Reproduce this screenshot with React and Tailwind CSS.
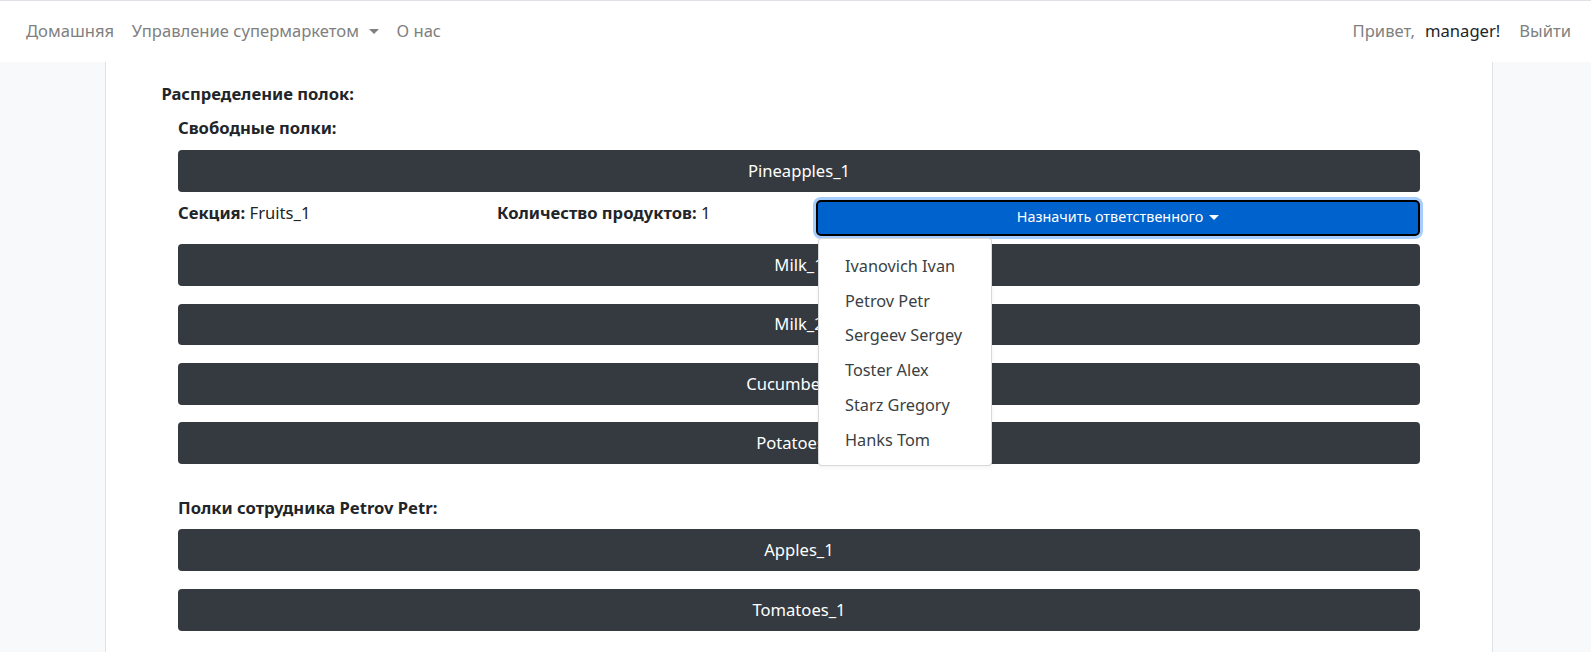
import React from 'react';

const freeShelves = ['Milk_1', 'Milk_2', 'Cucumbers_1', 'Potatoes_1'];
const ownShelves = ['Apples_1', 'Tomatoes_1'];
const employees = ['Ivanovich Ivan', 'Petrov Petr', 'Sergeev Sergey', 'Toster Alex', 'Starz Gregory', 'Hanks Tom'];

const Caret = ({ className }) => (
  <span className={`inline-block w-0 h-0 border-x-[5px] border-x-transparent border-t-[5px] align-middle ${className}`} />
);

const ShelfBar = ({ name, className = '' }) => (
  <div className={`h-[41.8px] rounded-[4px] bg-[#343a40] text-white flex items-center justify-center ${className}`}>
    {name}
  </div>
);

const App = () => {
  return (
    <div className="min-h-screen bg-[#f8f9fa] font-['Noto_Sans',sans-serif] text-[16.6px] leading-[26.4px] text-[#212529] flex flex-col">
      {/* Navbar */}
      <nav className="h-[62px] shrink-0 bg-white border-t border-[#dee2e6] flex items-center justify-between pl-[26px] pr-[20px]">
        <div className="flex items-center text-[#808080]">
          <span>Домашняя</span>
          <span className="ml-[17.6px] flex items-center">
            Управление супермаркетом
            <Caret className="ml-[10px] border-t-[#808080]" />
          </span>
          <span className="ml-[17.6px]">О нас</span>
        </div>
        <div className="flex items-center">
          <span className="text-[#808080]">Привет,</span>
          <span className="ml-[10px] text-[#212529]">manager!</span>
          <span className="ml-[19px] text-[#808080]">Выйти</span>
        </div>
      </nav>

      {/* Content */}
      <div className="flex-1 ml-[105px] w-[1388px] bg-white border-x border-[#dee2e6] pl-[55.5px] pr-[55.5px] pt-[19px] pb-[20px]">
        <div className="font-bold">Распределение полок:</div>
        <div className="px-[16.5px]">
          <div className="font-bold mt-[8px]">Свободные полки:</div>
          <ShelfBar name="Pineapples_1" className="mt-[8px]" />

          <div className="grid grid-cols-[319px_319px_1fr] mt-[8px] mb-[8.5px] h-[36px]">
            <div>
              <span className="font-bold">Секция:</span> Fruits_1
            </div>
            <div>
              <span className="font-bold">Количество продуктов:</span> 1
            </div>
            <div className="relative">
              <button className="w-full h-[36px] rounded-[5px] border-2 border-black bg-[#0062cc] text-white text-[14.4px] flex items-center justify-center shadow-[0_0_0_3px_#a6cdfd]">
                Назначить ответственного
                <Caret className="ml-[6px] border-t-white" />
              </button>
              <div className="absolute z-10 top-[38px] left-[2px] w-[174px] bg-white border border-[rgba(0,0,0,0.15)] rounded-[4px] pt-[10px] pb-[8px] shadow-[0_2px_4px_rgba(0,0,0,0.05)]">
                {employees.map((e) => (
                  <div key={e} className="px-[26px] py-[4.2px] text-[16.3px] text-[#3a3f44] whitespace-nowrap">
                    {e}
                  </div>
                ))}
              </div>
            </div>
          </div>

          <div className="flex flex-col gap-[17.6px]">
            {freeShelves.map((s) => (
              <ShelfBar key={s} name={s} />
            ))}
          </div>

          <div className="font-bold mt-[31px]">Полки сотрудника Petrov Petr:</div>
          <div className="flex flex-col gap-[17.6px] mt-[8px]">
            {ownShelves.map((s) => (
              <ShelfBar key={s} name={s} />
            ))}
          </div>
        </div>
      </div>
    </div>
  );
};

export default App;
